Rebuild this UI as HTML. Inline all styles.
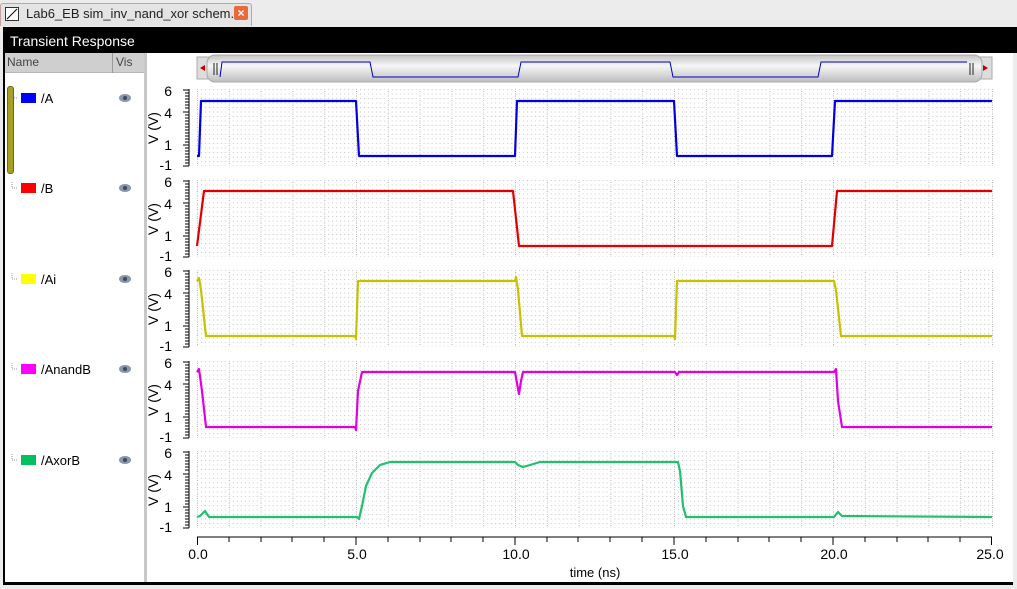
<!DOCTYPE html>
<html><head><style>
body{margin:0;width:1017px;height:589px;overflow:hidden;background:#ececec;font-family:"Liberation Sans",sans-serif;position:relative}
.abs{position:absolute}
</style></head><body>
<div class="abs" style="left:0;top:3px;width:250px;height:22px;background:#e4e4e4;border:1px solid #c9a0a0;border-bottom:none;border-radius:3px 3px 0 0"></div>
<div class="abs" style="left:5px;top:7px;width:12px;height:12px;border:1px solid #333;background:#fff"></div>
<svg class="abs" style="left:5px;top:7px" width="14" height="14"><line x1="2" y1="12" x2="12" y2="2" stroke="#000"/></svg>
<div class="abs" style="left:26px;top:6px;font-size:13px;color:#222">Lab6_EB sim_inv_nand_xor schem...</div>
<div class="abs" style="left:234px;top:6px;width:14px;height:14px;background:#e8693a;border-radius:2px;color:#fff;font-size:12px;line-height:14px;text-align:center;font-weight:bold">×</div>
<div class="abs" style="left:3px;top:27px;width:1014px;height:558px;background:#000"></div>
<div class="abs" style="left:10px;top:33px;color:#fff;font-size:14px">Transient Response</div>
<div class="abs" style="left:5px;top:53px;width:1008px;height:529px;background:#fff"></div>
<div class="abs" style="left:5px;top:53px;width:140px;height:19px;background:#cfcfcf;border-bottom:1px solid #b8b8b8"></div>
<div class="abs" style="left:112px;top:53px;width:1px;height:20px;background:#999"></div>
<div class="abs" style="left:7px;top:55px;font-size:12px;color:#444">Name</div>
<div class="abs" style="left:116px;top:55px;font-size:12px;color:#444">Vis</div>
<div class="abs" style="left:144px;top:53px;width:3px;height:529px;background:#c8c8c8"></div>
<div class="abs" style="left:7px;top:86px;width:5px;height:86px;background:#a7a020;border-radius:3px;border:1px solid #6b6a10"></div>
<div class="abs" style="left:1013px;top:53px;width:4px;height:532px;background:#ececec"></div>

<svg class="abs" style="left:0;top:0" width="1017" height="589">
<defs>
<pattern id="g" x="197" y="0" width="31.8" height="4.5" patternUnits="userSpaceOnUse">
<rect x="0" y="0" width="1" height="1" fill="#c8c8c8"/><rect x="4" y="0" width="1" height="1" fill="#c8c8c8"/><rect x="8" y="0" width="1" height="1" fill="#c8c8c8"/><rect x="12" y="0" width="1" height="1" fill="#c8c8c8"/><rect x="16" y="0" width="1" height="1" fill="#c8c8c8"/><rect x="20" y="0" width="1" height="1" fill="#c8c8c8"/><rect x="24" y="0" width="1" height="1" fill="#c8c8c8"/><rect x="28" y="0" width="1" height="1" fill="#c8c8c8"/><rect x="0" y="2" width="1" height="1" fill="#b0b0b0"/>
</pattern>
<g id="ico"><ellipse cx="0" cy="0" rx="6" ry="4" fill="#8a96aa"/><circle cx="0" cy="0" r="2" fill="#3c4a62"/></g>
<g id="ax">
<rect x="197" y="0" width="796" height="77" fill="url(#g)"/>
<line x1="189" y1="0" x2="189" y2="77" stroke="#000"/>
<path stroke="#000" d="M183,1h6M183,23h6M183,56h6M183,77h6M185,4h4M185,7h4M185,10h4M185,13h4M185,16h4M185,19h4M185,26h4M185,29h4M185,32h4M185,35h4M185,38h4M185,41h4M185,44h4M185,47h4M185,50h4M185,53h4M185,59h4M185,62h4M185,65h4M185,68h4M185,71h4M185,74h4"/>
<g font-size="14" fill="#000" text-anchor="end"><text x="172" y="7">6</text><text x="172" y="29">4</text><text x="172" y="61">1</text><text x="172" y="81">-1</text>
<text transform="translate(158,39) rotate(-90)" text-anchor="middle">V (V)</text></g>
</g>
</defs>
<g font-size="13" fill="#000">
<g transform="translate(0,98)"><path d="M12,-6 v6 h6" stroke="#999" stroke-dasharray="1 1" fill="none"/><rect x="21" y="-5" width="15" height="10" fill="#0000ff"/><text x="41" y="5">/A</text><use href="#ico" x="125" y="0"/></g>
<g transform="translate(0,188)"><path d="M12,-6 v6 h6" stroke="#999" stroke-dasharray="1 1" fill="none"/><rect x="21" y="-5" width="15" height="10" fill="#ff0000"/><text x="41" y="5">/B</text><use href="#ico" x="125" y="0"/></g>
<g transform="translate(0,279)"><path d="M12,-6 v6 h6" stroke="#999" stroke-dasharray="1 1" fill="none"/><rect x="21" y="-5" width="15" height="10" fill="#ffff00"/><text x="41" y="5">/Ai</text><use href="#ico" x="125" y="0"/></g>
<g transform="translate(0,369)"><path d="M12,-6 v6 h6" stroke="#999" stroke-dasharray="1 1" fill="none"/><rect x="21" y="-5" width="15" height="10" fill="#ff00ff"/><text x="41" y="5">/AnandB</text><use href="#ico" x="125" y="0"/></g>
<g transform="translate(0,460)"><path d="M12,-6 v6 h6" stroke="#999" stroke-dasharray="1 1" fill="none"/><rect x="21" y="-5" width="15" height="10" fill="#00c060"/><text x="41" y="5">/AxorB</text><use href="#ico" x="125" y="0"/></g>
</g>
<rect x="197" y="57" width="12" height="22" fill="#ddd" stroke="#aaa"/><path d="M200,68 l5,-3 v6z" fill="#c00000"/>
<rect x="980" y="57" width="12" height="22" fill="#ddd" stroke="#aaa"/><path d="M988,68 l-5,-3 v6z" fill="#c00000"/>
<defs><linearGradient id="sb" x1="0" y1="0" x2="0" y2="1"><stop offset="0" stop-color="#c4c4c4"/><stop offset=".4" stop-color="#f6f6f6"/><stop offset="1" stop-color="#bdbdbd"/></linearGradient></defs>
<rect x="207" y="55" width="775" height="27" rx="8" fill="url(#sb)" stroke="#aaa"/>
<path d="M214,63v12M217,63v12M970,63v12M973,63v12" stroke="#222"/>
<path d="M220,77 L222,62 L370,62 L373,77 L518,77 L521,62 L670,62 L673,77 L818,77 L821,62 L967,62" stroke="#0000c0" fill="none"/>
<use href="#ax" y="89"/>
<use href="#ax" y="180"/>
<use href="#ax" y="270"/>
<use href="#ax" y="361"/>
<use href="#ax" y="451"/>
<g fill="none" stroke-width="2.2" stroke-linejoin="round">
<path transform="translate(0,90)" stroke="#0000e0" d="M197,66 L199,66 L201,11 L356,11 L359,66 L515,66 L517,11 L674,11 L677,66 L832,66 L835,11 L992,11"/>
<path transform="translate(0,180)" stroke="#e00000" d="M197,66 L204,11 L513,11 L519,66 L832,66 L837,11 L992,11"/>
<path transform="translate(0,270)" stroke="#c8c000" d="M197,11 L199,8 L201,20 L206,66 L355,66 L356,69 L358,11 L515,11 L516,7 L518,20 L522,66 L674,66 L675,69 L677,11 L834,11 L836,20 L841,66 L992,66"/>
<path transform="translate(0,361)" stroke="#e000e0" d="M197,11 L199,8 L202,30 L206,66 L355,66 L356,69 L358,30 L362,11 L515,11 L517,22 L519,33 L521,20 L523,11 L675,11 L677,14 L679,11 L834,11 L836,8 L838,40 L842,66 L992,66"/>
<path transform="translate(0,451)" stroke="#20c070" d="M197,66 L200,65 L205,60 L209,66 L357,66 L359,68 L362,55 L366,35 L372,22 L380,14 L390,11 L515,11 L518,14 L523,16 L530,14 L540,11 L678,11 L680,20 L683,55 L686,66 L834,66 L838,61 L842,65 L992,66"/>
</g>
<line x1="197" y1="537" x2="992" y2="537" stroke="#000"/>
<g stroke="#000"><path d="M197.5,537v8M229,537v5M261,537v5M292,537v5M324,537v5M356,537v8M388,537v5M420,537v5M451,537v5M483,537v5M515,537v8M547,537v5M578,537v5M610,537v5M642,537v5M674,537v8M706,537v5M738,537v5M769,537v5M801,537v5M833,537v8M865,537v5M897,537v5M928,537v5M960,537v5M991.5,537v8"/></g>
<g font-size="14" fill="#000" text-anchor="middle">
<text x="198" y="559">0.0</text><text x="357" y="559">5.0</text><text x="516" y="559">10.0</text><text x="675" y="559">15.0</text><text x="834" y="559">20.0</text><text x="990" y="559">25.0</text>
<text x="595" y="577" font-size="13">time (ns)</text>
</g>
</svg>
</body></html>
